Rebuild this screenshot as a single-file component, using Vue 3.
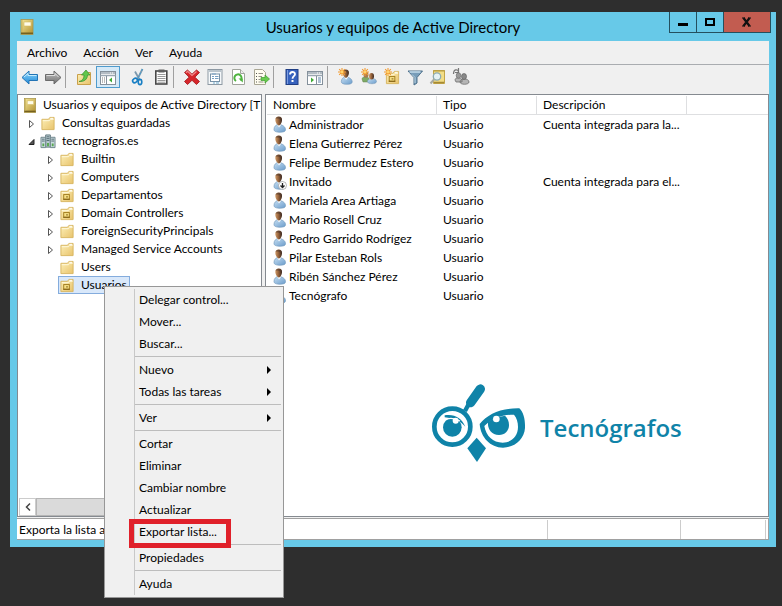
<script setup>
import { ref } from 'vue'

const menus = ['Archivo', 'Acción', 'Ver', 'Ayuda']

const toolbar = [
  { icon: 'back', label: 'Atrás' },
  { icon: 'forward', label: 'Adelante' },
  { sep: true },
  { icon: 'up', label: 'Subir un nivel' },
  { icon: 'tree', label: 'Mostrar árbol', on: true },
  { icon: 'cut', label: 'Cortar' },
  { icon: 'clipboard', label: 'Copiar' },
  { sep: true },
  { icon: 'delete', label: 'Eliminar' },
  { icon: 'props', label: 'Propiedades' },
  { icon: 'refresh', label: 'Actualizar' },
  { icon: 'export', label: 'Exportar lista' },
  { sep: true },
  { icon: 'help', label: 'Ayuda' },
  { icon: 'panel', label: 'Panel de acciones' },
  { sep: true },
  { icon: 'newuser', label: 'Nuevo usuario' },
  { icon: 'newgroup', label: 'Nuevo grupo' },
  { icon: 'newou', label: 'Nueva unidad organizativa' },
  { icon: 'filter', label: 'Filtro' },
  { icon: 'find', label: 'Buscar' },
  { icon: 'addgroup', label: 'Agregar a un grupo' }
]

const tree = [
  { text: 'Usuarios y equipos de Active Directory [T', icon: 'book', level: 0 },
  { text: 'Consultas guardadas', icon: 'folder', level: 1, arrow: 'closed' },
  { text: 'tecnografos.es', icon: 'domain', level: 1, arrow: 'open' },
  { text: 'Builtin', icon: 'folder', level: 2, arrow: 'closed' },
  { text: 'Computers', icon: 'folder', level: 2, arrow: 'closed' },
  { text: 'Departamentos', icon: 'ou', level: 2, arrow: 'closed' },
  { text: 'Domain Controllers', icon: 'ou', level: 2, arrow: 'closed' },
  { text: 'ForeignSecurityPrincipals', icon: 'folder', level: 2, arrow: 'closed' },
  { text: 'Managed Service Accounts', icon: 'folder', level: 2, arrow: 'closed' },
  { text: 'Users', icon: 'folder', level: 2 },
  { text: 'Usuarios', icon: 'ou', level: 2 }
]
const selected = ref('Usuarios')

const users = [
  { name: 'Administrador', desc: 'Cuenta integrada para la...' },
  { name: 'Elena Gutierrez Pérez' },
  { name: 'Felipe Bermudez Estero' },
  { name: 'Invitado', desc: 'Cuenta integrada para el...', disabled: true },
  { name: 'Mariela Area Artiaga' },
  { name: 'Mario Rosell Cruz' },
  { name: 'Pedro Garrido Rodrígez' },
  { name: 'Pilar Esteban Rols' },
  { name: 'Ribén Sánchez Pérez' },
  { name: 'Tecnógrafo' }
]

const context = [
  [{ text: 'Delegar control...' }, { text: 'Mover...' }, { text: 'Buscar...' }],
  [{ text: 'Nuevo', sub: true }, { text: 'Todas las tareas', sub: true }],
  [{ text: 'Ver', sub: true }],
  [
    { text: 'Cortar' },
    { text: 'Eliminar' },
    { text: 'Cambiar nombre' },
    { text: 'Actualizar' },
    { text: 'Exportar lista...', marked: true }
  ],
  [{ text: 'Propiedades' }],
  [{ text: 'Ayuda' }]
]
</script>

<template>
  <svg class="defs" width="0" height="0" aria-hidden="true">
    <defs>
      <linearGradient id="gFolder" x1="0" y1="0" x2="1" y2="1">
        <stop offset="0" stop-color="#fdf0b8" /><stop offset="1" stop-color="#e8c36c" />
      </linearGradient>
      <linearGradient id="gBlue" x1="0" y1="0" x2="0" y2="1">
        <stop offset="0" stop-color="#8fdcff" /><stop offset="1" stop-color="#1f86d6" />
      </linearGradient>
      <linearGradient id="gGrey" x1="0" y1="0" x2="0" y2="1">
        <stop offset="0" stop-color="#c4c4c4" /><stop offset="1" stop-color="#6e6e6e" />
      </linearGradient>
      <linearGradient id="gShirt" x1="0" y1="0" x2="1" y2="1">
        <stop offset="0" stop-color="#c6def2" /><stop offset="1" stop-color="#6a9ccb" />
      </linearGradient>
      <linearGradient id="gHead" x1="0" y1="0" x2="1" y2="0">
        <stop offset="0" stop-color="#cf9a68" /><stop offset="0.5" stop-color="#93603a" /><stop offset="1" stop-color="#3d2a20" />
      </linearGradient>
      <linearGradient id="gBook" x1="0" y1="0" x2="1" y2="1">
        <stop offset="0" stop-color="#f6e79a" /><stop offset="1" stop-color="#b1902e" />
      </linearGradient>
      <symbol id="i-book" viewBox="0 0 16 16">
        <rect x="2" y=".5" width="12" height="15" fill="url(#gBook)" stroke="#a8954a" stroke-width=".8" />
        <path d="M2 13.500h12v1.500H2z" fill="#75611f" /><path d="M3 1v12" stroke="#c9b45e" />
        <rect x="5" y="3" width="7" height="4" fill="#fffce8" stroke="#d2b95f" stroke-width=".6" />
      </symbol>
      <symbol id="i-folder" viewBox="0 0 16 16">
        <path d="M1.500 3.500h7l1.500-2h4.500v13h-13z" fill="url(#gFolder)" stroke="#d8b560" />
        <path d="M2.500 5h7l1.500-1.500h3" stroke="#fffbe0" fill="none" /><path d="M10.500 2.500h3" stroke="#fff" />
      </symbol>
      <symbol id="i-ou" viewBox="0 0 16 16">
        <use href="#i-folder" />
        <rect x="4.500" y="7" width="6" height="5" fill="#f6df86" stroke="#a17c1c" />
        <path d="M4 12h7M7 9.500h2" stroke="#7c5c10" />
      </symbol>
      <symbol id="i-domain" viewBox="0 0 16 16">
        <path d="M5.500 1h5v13h-5z" fill="#b8cad0" stroke="#61777e" />
        <path d="M.5 3.500h5v11h-5zM10.500 3.500h5v11h-5z" fill="#cbdbe0" stroke="#6c8389" />
        <path d="M1.500 5.500h3M1.500 7.500h3M11.500 5.500h3M11.500 7.500h3M6.500 3h3M6.500 5h3M6.500 7h3" stroke="#4e666e" />
        <path d="M3 10v3M8 9.500V13M13 10v3" stroke="#58a84f" stroke-width="2" />
      </symbol>
      <symbol id="i-user" viewBox="0 0 14 17">
        <path d="M1 13.500c0-3 2-5 4.500-5 3.500 0 7 2 7 5.200 0 1.800-2 2.500-5.500 2.500S1 15.500 1 13.500z" fill="url(#gShirt)" stroke="#7399bd" stroke-width=".7" />
        <path d="M4 8.500l2 3 2.500-3z" fill="#f4f8fb" />
        <path d="M2.300 3.800C2.300 1.500 4 .5 5.800.5 8 .5 9.300 2 9 4.600 8.700 7 7.500 9.400 5.800 9.400S2.300 6.300 2.300 3.800z" fill="url(#gHead)" />
        <path d="M2.500 2.500C3.500 0 8.500-.3 9 4l-1 2c0-2.500-1-3.800-5.500-3.500z" fill="#4c372b" opacity=".6" />
      </symbol>
      <symbol id="i-star" viewBox="0 0 9 9">
        <path d="M4.500 0v9M0 4.500h9M1.300 1.300l6.400 6.400M7.700 1.300L1.300 7.700" stroke="#f39a2d" stroke-width="1.200" />
        <circle cx="4.500" cy="4.500" r="1.600" fill="#ffd56b" />
      </symbol>
      <symbol id="i-back" viewBox="0 0 18 18">
        <path d="M1 9.500L8 3v3.500h8.500v6H8V16z" fill="url(#gBlue)" stroke="#2374b5" stroke-linejoin="round" />
        <path d="M3 9l4-3.500v2h8.500" fill="none" stroke="#c4ecff" />
      </symbol>
      <symbol id="i-forward" viewBox="0 0 18 18">
        <path d="M17 9.500L10 3v3.500H1.500v6H10V16z" fill="url(#gGrey)" stroke="#6b6b6b" stroke-linejoin="round" />
        <path d="M2.500 7.500H11v-2L14.500 9" fill="none" stroke="#ddd" />
      </symbol>
      <symbol id="i-up" viewBox="0 0 18 18">
        <path d="M2.500 6.500h7l1.500-2h4.500v12h-13z" fill="url(#gFolder)" stroke="#c9a04a" />
        <path d="M4 13.500c4-1 5-3.500 5-6.500H6.500L11 2l4 5h-2.500c0 4-3 7-8.500 6.500z" fill="#62c74b" stroke="#398f2c" stroke-width=".7" />
      </symbol>
      <symbol id="i-tree" viewBox="0 0 18 18">
        <rect x="1.500" y="3.500" width="15" height="13" fill="#fff" stroke="#84909b" />
        <path d="M2 5h14M1.500 7.500h15" stroke="#9aa6b1" stroke-width="1.500" /><path d="M11 5h1M13 5h1" stroke="#fff" />
        <path d="M7.500 8v8.500" stroke="#84909b" /><path d="M3 10h3M3 12h3M3 14h3" stroke="#777" stroke-dasharray="1 1 2" />
        <path d="M13 9.500v5L10 12z" fill="#3eaa35" />
      </symbol>
      <symbol id="i-panel" viewBox="0 0 18 18">
        <rect x="1.500" y="3.500" width="15" height="13" fill="#fff" stroke="#84909b" />
        <path d="M2 5h14M1.500 7.500h15" stroke="#9aa6b1" stroke-width="1.500" /><path d="M11 5h1M13 5h1" stroke="#fff" />
        <path d="M10.500 8v8.500" stroke="#84909b" /><path d="M12 10h3M12 12h3M12 14h3" stroke="#5d83a8" />
        <path d="M5 9.500v5L8 12z" fill="#3eaa35" />
      </symbol>
      <symbol id="i-cut" viewBox="0 0 18 18">
        <path d="M13.500 1L8.500 11M6 3.500l4.500 8" stroke="#7d99ae" stroke-width="1.800" />
        <path d="M13.500 1L8.500 11" stroke="#3c9bd0" stroke-width="1" stroke-dasharray="2 2" />
        <ellipse cx="6" cy="12.500" rx="2.500" ry="2" transform="rotate(-35 6 12.500)" fill="none" stroke="#187fc4" stroke-width="1.600" />
        <ellipse cx="11" cy="14" rx="1.800" ry="2.600" fill="none" stroke="#187fc4" stroke-width="1.600" />
      </symbol>
      <symbol id="i-clipboard" viewBox="0 0 18 18">
        <rect x="3.800" y="3" width="11" height="13" fill="#fff" stroke="#494949" stroke-width="1.600" />
        <rect x="6.500" y="1.500" width="6" height="3" fill="#606060" />
        <path d="M5.500 6.500h8M5.500 8.500h8M5.500 10.500h8M5.500 12.500h8M5.500 14.200h8" stroke="#8d8d8d" stroke-width=".9" />
      </symbol>
      <symbol id="i-delete" viewBox="0 0 18 18">
        <path d="M1.500 4.500L4.500 2 9 6.200 13.500 2l3 2.500-4.600 4.700 4.600 4.300-3 3L9 12.300l-4.500 4.200-3-3 4.600-4.300z" fill="#d5262b" stroke="#a01418" stroke-width=".8" />
        <path d="M3 4.700L4.600 3.300 9 7.500l4.500-4" stroke="#f08a8c" stroke-width="1.200" fill="none" />
      </symbol>
      <symbol id="i-props" viewBox="0 0 18 18">
        <rect x="2" y="1.500" width="14" height="15" fill="#f5f8fa" stroke="#8d99a3" /><path d="M3 3h12" stroke="#bac5cd" stroke-width="2" />
        <rect x="4.500" y="6" width="9" height="7.500" fill="#fff" stroke="#7893a9" />
        <path d="M6 8.500h2M9 8.500h3.500M6 10.500h2M9 10.500h3.500M6 6h4" stroke="#76a0c4" /><path d="M7 15h2M10 15h3" stroke="#6faacc" />
      </symbol>
      <symbol id="i-refresh" viewBox="0 0 18 18">
        <path d="M3.500 1.500h8l4 4v11h-12z" fill="#fff" stroke="#a0a49c" /><path d="M11.500 1.500v4h4" fill="#eee" stroke="#a0a49c" />
        <path d="M7 13a3.600 3.600 0 1 1 4.500-.5" fill="none" stroke="#4eb33e" stroke-width="2" /><path d="M9.500 10.500h4.300v4z" fill="#4eb33e" />
      </symbol>
      <symbol id="i-export" viewBox="0 0 18 18">
        <path d="M2.500 1.500h8l3 3v12h-11z" fill="#fffdf0" stroke="#a9a694" />
        <path d="M4 5.500h1M4 8.500h1M4 11.500h1M4 14h1" stroke="#555" /><path d="M6.500 5.500H11M6.500 8.500H10M6.500 11.500h2M6.500 14h5" stroke="#97938a" />
        <path d="M9 9.500h4V7l4.500 4-4.500 4v-2.500H9z" fill="#69cc50" stroke="#3d9c2c" stroke-width=".7" />
      </symbol>
      <symbol id="i-help" viewBox="0 0 18 18">
        <rect x="3" y="1.500" width="12" height="15" fill="#3762bd" stroke="#203e84" /><path d="M4.500 2v14" stroke="#7c9ce0" />
        <path d="M7 6.500c0-3.300 5-3.300 5-.3 0 2-2.500 2-2.500 4.500" fill="none" stroke="#fff" stroke-width="1.800" /><rect x="8.500" y="12" width="2" height="2" fill="#fff" />
      </symbol>
      <symbol id="i-newuser" viewBox="0 0 18 18">
        <use href="#i-user" x="3" y="1" width="14" height="16" /><use href="#i-star" x="1" y="0" width="8" height="8" />
      </symbol>
      <symbol id="i-group" viewBox="0 0 18 18">
        <path d="M2 11c0-3 7-3 7 0v3H3z" fill="#7eaa65" stroke="#648350" stroke-width=".5" /><ellipse cx="6" cy="6.800" rx="2.500" ry="3" fill="#a77b50" />
        <path d="M7.500 13.500c0-4 9-4 9 0 0 3-9 3-9 0z" fill="url(#gShirt)" stroke="#7193b2" stroke-width=".5" /><ellipse cx="11.500" cy="8.300" rx="2.500" ry="3.200" fill="url(#gHead)" />
      </symbol>
      <symbol id="i-newgroup" viewBox="0 0 18 18">
        <use href="#i-group" /><use href="#i-star" x="1" y="0" width="8" height="8" />
      </symbol>
      <symbol id="i-newou" viewBox="0 0 18 18">
        <use href="#i-ou" x="2" y="2" width="15" height="15" /><use href="#i-star" x="1" y="0" width="8" height="8" />
      </symbol>
      <symbol id="i-filter" viewBox="0 0 18 18">
        <path d="M2 3h14.500l-5.500 6.500V15l-3 2V9.500z" fill="#789db9" stroke="#4f718b" /><path d="M3.500 4h11" stroke="#c4dceb" stroke-width="1.500" /><path d="M6 6.500l3 3V15" fill="none" stroke="#b9d3e3" />
      </symbol>
      <symbol id="i-find" viewBox="0 0 18 18">
        <path d="M4.500 2.500h11v13h-11z" fill="#f2dd86" stroke="#c2a548" /><path d="M5 14.500h10" stroke="#a68a35" stroke-width="1.500" /><path d="M4 3h12" stroke="#b59b40" />
        <circle cx="8" cy="8.500" r="3.700" fill="#e5f2f4" stroke="#8caab0" stroke-width="1.300" /><path d="M5 11.500l-3.500 4" stroke="#a8aaa3" stroke-width="2" />
      </symbol>
      <symbol id="i-addgroup" viewBox="0 0 18 18">
        <path d="M1.500 6c0-5 4-5 5-2.500M6.500 0v4.500H3" fill="none" stroke="#777" stroke-width="1.200" />
        <path d="M3 12c0-3 6-3 7 0v2H4zM8 14c0-4 9-4 9 0 0 3-9 3-9 0z" fill="#b5b5b5" stroke="#6d6d6d" stroke-width=".8" />
        <ellipse cx="6.500" cy="7.500" rx="2.300" ry="2.800" fill="#999" stroke="#666" stroke-width=".6" /><ellipse cx="12" cy="8.500" rx="2.500" ry="3" fill="#888" stroke="#555" stroke-width=".6" />
      </symbol>
    </defs>
  </svg>

  <div class="desktop">
    <main class="window">
      <header class="titlebar">
        <svg class="app-icon"><use href="#i-book" /></svg>
        <h1>Usuarios y equipos de Active Directory</h1>
        <div class="controls">
          <button aria-label="Minimizar"><svg width="12" height="12"><path d="M1 7h10v3H1z" /></svg></button>
          <button aria-label="Maximizar"><svg width="12" height="12"><path d="M2 3h8v6H2z" fill="none" stroke="#000" stroke-width="2" /></svg></button>
          <button class="close" aria-label="Cerrar"><svg width="12" height="12"><path d="M2.500 2l6 8M8.500 2l-6 8" stroke="#111" stroke-width="2.200" /><path d="M1 2h3M7 2h3M1 10h3M7 10h3" stroke="#111" /></svg></button>
        </div>
      </header>

      <div class="client">
        <nav class="menubar">
          <button v-for="m in menus" :key="m">{{ m }}</button>
        </nav>

        <div class="toolbar" role="toolbar">
          <template v-for="(t, i) in toolbar" :key="i">
            <span v-if="t.sep" class="sep"></span>
            <button v-else :class="{ on: t.on }" :aria-label="t.label">
              <svg><use :href="'#i-' + t.icon" /></svg>
            </button>
          </template>
        </div>

        <div class="panes">
          <section class="pane tree-pane">
            <ul class="tree">
              <li v-for="n in tree" :key="n.text" :class="'level-' + n.level">
                <span v-if="n.level" class="arrow">
                  <svg v-if="n.arrow === 'closed'" width="7" height="10"><path d="M1.500 1.500v7L5.500 5z" fill="#fff" stroke="#555" /></svg>
                  <svg v-else-if="n.arrow === 'open'" width="7" height="10"><path d="M6 2.500v5H1z" fill="#555" stroke="#222" /></svg>
                </span>
                <button :class="['node', { selected: selected === n.text }]" @click="selected = n.text">
                  <svg><use :href="'#i-' + n.icon" /></svg>{{ n.text }}
                </button>
              </li>
            </ul>
            <div class="scrollbar">
              <button aria-label="Desplazar a la izquierda"><svg width="8" height="10"><path d="M6 1.500L2.500 5 6 8.500" fill="none" stroke="#444" stroke-width="1.500" /></svg></button>
              <span class="thumb"></span>
              <button aria-label="Desplazar a la derecha"><svg width="8" height="10"><path d="M2 1.500L5.500 5 2 8.500" fill="none" stroke="#444" stroke-width="1.500" /></svg></button>
            </div>
          </section>

          <section class="pane list-pane">
            <table>
              <colgroup><col class="c-name" /><col class="c-type" /><col class="c-desc" /><col /></colgroup>
              <thead>
                <tr><th>Nombre</th><th>Tipo</th><th>Descripción</th><td></td></tr>
              </thead>
              <tbody>
                <tr v-for="u in users" :key="u.name">
                  <td>
                    <span class="user">
                      <svg viewBox="0 0 14 17">
                        <use href="#i-user" width="14" height="17" />
                        <g v-if="u.disabled"><circle cx="9.500" cy="12.500" r="4" fill="#fff" stroke="#999" stroke-width=".7" /><path d="M9.500 10v4.500M7.500 12.500l2 2 2-2" fill="none" stroke="#222" stroke-width="1.300" /></g>
                      </svg>{{ u.name }}
                    </span>
                  </td>
                  <td>Usuario</td>
                  <td>{{ u.desc }}</td>
                  <td></td>
                </tr>
              </tbody>
            </table>
            <div class="brand">
              <svg viewBox="6 10 291 240" width="97" height="80" aria-hidden="true">
                <g fill="#0f83a8">
                  <circle cx="73" cy="141" r="54" fill="none" stroke="#0f83a8" stroke-width="14" />
                  <path d="M111 94l10-19" stroke="#0f83a8" stroke-width="13" />
                  <path d="M128 69l29-41" stroke="#0f83a8" stroke-width="28" stroke-linecap="round" />
                  <circle cx="73" cy="143" r="28" />
                  <path d="M50 107c28-5 50 6 62 34-14-16-34-25-62-28z" />
                  <path d="M46 123c14-9 32-9 50 1" fill="none" stroke="#fff" stroke-width="4" />
                  <circle cx="83" cy="123" r="9" fill="#fff" />
                  <path fill-rule="evenodd" d="M155 133c25-30 63-48 119-47 13 12 18 34 17 59-2 35-33 59-66 59-38 0-67-31-70-71zM169 139c5 30 26 50 55 50 27 0 46-20 46-47 0-15-4-28-12-37-33 0-64 9-89 34z" />
                  <path d="M180 127c14-10 31-16 51-19 8 7 12 17 12 28 0 18-13 30-30 30-22 0-35-17-33-39z" />
                  <circle cx="205" cy="118" r="10" fill="#fff" />
                  <path d="M146 174l28 32-27 41-29-41z" />
                </g>
              </svg>
              <span>Tecnógrafos</span>
            </div>
          </section>
        </div>

        <footer class="status"><span>Exporta la lista a</span><span></span><span></span><span></span></footer>
      </div>
    </main>

    <div class="context" role="menu">
      <div v-for="(group, i) in context" :key="i" class="group">
        <button v-for="c in group" :key="c.text" role="menuitem" :class="{ marked: c.marked }">
          {{ c.text }}
          <svg v-if="c.sub" width="6" height="8"><path d="M1 0v8l4-4z" /></svg>
        </button>
      </div>
    </div>
  </div>
</template>

<style>
body {
  margin: 0;
  background: #2e2e2e;
}
</style>

<style scoped>
.defs {
  position: absolute;
}
.desktop {
  box-sizing: border-box;
  position: relative;
  display: flex;
  min-height: 100vh;
  padding: 12px 6px 59px 10px;
  background: #2e2e2e;
  color: #000;
  font: 12px/18px Lato, "Open Sans", sans-serif;
}
button {
  margin: 0;
  padding: 0;
  border: 0;
  background: none;
  color: inherit;
  font: inherit;
}
svg {
  display: block;
  flex: none;
}
.window {
  flex: 1;
  min-width: 0;
  display: flex;
  flex-direction: column;
  padding: 0 7px 7px;
  background: #67c9e8;
}
.titlebar {
  display: grid;
  grid-template-columns: 1fr auto 1fr;
  height: 29px;
}
.app-icon {
  width: 16px;
  height: 16px;
  margin: 7px 0 0 2px;
}
h1 {
  margin: 0;
  font-size: 15px;
  line-height: 30px;
  font-weight: 400;
}
.controls {
  justify-self: end;
  display: flex;
  height: 20px;
  margin-right: -2px;
  border: 1px solid #24505e;
  border-top: 0;
}
.controls button {
  display: flex;
  align-items: center;
  justify-content: center;
  box-sizing: border-box;
  width: 27px;
  border-right: 1px solid #24505e;
}
.controls .close {
  width: 46px;
  border: 0;
  background: #c25c50;
}
.client {
  flex: 1;
  display: flex;
  flex-direction: column;
  min-height: 0;
  background: #f0f0f0;
}
.menubar {
  display: flex;
  gap: 16px;
  height: 23px;
  padding-left: 10px;
  border-bottom: 1px solid #a9acb0;
}
.toolbar {
  display: flex;
  align-items: center;
  gap: 1px;
  height: 24px;
  padding: 0 2px 5px;
}
.toolbar button {
  display: flex;
  align-items: center;
  justify-content: center;
  width: 22px;
  height: 22px;
}
.toolbar .on {
  box-sizing: border-box;
  width: 24px;
  margin-right: 6px;
  border: 1px solid #4f9bcd;
  background: #d5e9f7;
}
.toolbar svg {
  width: 18px;
  height: 18px;
}
.sep {
  width: 1px;
  height: 22px;
  margin-right: 6px;
  background: #a0a0a0;
}
.panes {
  flex: 1;
  display: flex;
  gap: 3px;
  min-height: 0;
}
.pane {
  box-sizing: border-box;
  border: 1px solid #858a90;
  background: #fff;
  overflow: hidden;
}
.tree-pane {
  flex: none;
  width: 245px;
  display: flex;
  flex-direction: column;
  justify-content: space-between;
}
.tree {
  margin: 0;
  padding: 1px 0 0 4px;
  list-style: none;
  overflow: hidden;
}
.tree li {
  display: flex;
  height: 18px;
  white-space: nowrap;
}
.level-1 {
  padding-left: 6px;
}
.level-2 {
  padding-left: 25px;
}
.arrow {
  width: 11px;
  padding-top: 5px;
}
.node {
  box-sizing: border-box;
  display: flex;
  align-items: center;
  gap: 6px;
  height: 18px;
  padding: 0 2px 0 0;
  border: 1px solid transparent;
}
.level-0 .node {
  border-left: 0;
  gap: 5px;
}
.selected {
  border-color: #84acdd;
  background: #d9e8fa;
}
.node svg {
  width: 16px;
  height: 15px;
}
.scrollbar {
  display: flex;
  height: 18px;
  margin: 0 1px;
  background: #f0f0f0;
}
.scrollbar button {
  display: flex;
  align-items: center;
  justify-content: center;
  box-sizing: border-box;
  width: 17px;
  border: 1px solid #ccc;
  background: #fff;
}
.thumb {
  flex: 1;
  margin-right: 60px;
  border: 1px solid #b5b5b5;
  background: #dadada;
}
.list-pane {
  flex: 1;
  min-width: 0;
  padding: 1px 0 0 1px;
}
table {
  width: 100%;
  table-layout: fixed;
  border-collapse: separate;
  border-spacing: 0;
}
.c-name {
  width: 170px;
}
.c-type {
  width: 100px;
}
.c-desc {
  width: 150px;
}
th,
td {
  box-sizing: border-box;
  height: 19px;
  padding: 0 0 0 6px;
  overflow: hidden;
  font-weight: 400;
  text-align: left;
  white-space: nowrap;
}
thead th,
thead td {
  border-bottom: 1px solid #dedfe1;
}
thead th {
  border-right: 1px solid #dedfe1;
}
.user {
  display: flex;
  align-items: center;
  gap: 2px;
}
.user svg {
  width: 14px;
  height: 17px;
}
.brand {
  display: flex;
  align-items: flex-end;
  gap: 13px;
  margin: 78px 0 0 163px;
  color: #0f83a8;
  font: 600 24px/70px "Open Sans", "Noto Sans", sans-serif;
}
.status {
  display: grid;
  grid-template-columns: 1fr 133px 85px 3px;
  height: 20px;
  margin-top: 1px;
  border: solid #a0a0a0;
  border-width: 1px 1px 1px 0;
  background: #fff;
}
.status span {
  padding: 2px 0 0 2px;
  overflow: hidden;
  white-space: nowrap;
}
.status span + span {
  padding: 0;
  margin-top: 1px;
  border-left: 1px solid #ccc;
}
.context {
  position: absolute;
  top: 286px;
  left: 104px;
  box-sizing: border-box;
  width: 180px;
  padding: 2px;
  border: 1px solid #979797;
  background: #f0f0f0 linear-gradient(#c8c8c8, #c8c8c8) 29px 2px / 1px 306px no-repeat;
}
.group + .group {
  padding-top: 4px;
  background: linear-gradient(#bdbdbd, #bdbdbd) 28px 1px / 100% 1px no-repeat;
}
.context button {
  position: relative;
  display: flex;
  align-items: center;
  justify-content: space-between;
  width: 100%;
  height: 22px;
  padding: 0 9px 0 32px;
}
.marked::after {
  content: "";
  position: absolute;
  inset: -2px 50px -5px 22px;
  border: 5px solid #e0202a;
}
</style>
